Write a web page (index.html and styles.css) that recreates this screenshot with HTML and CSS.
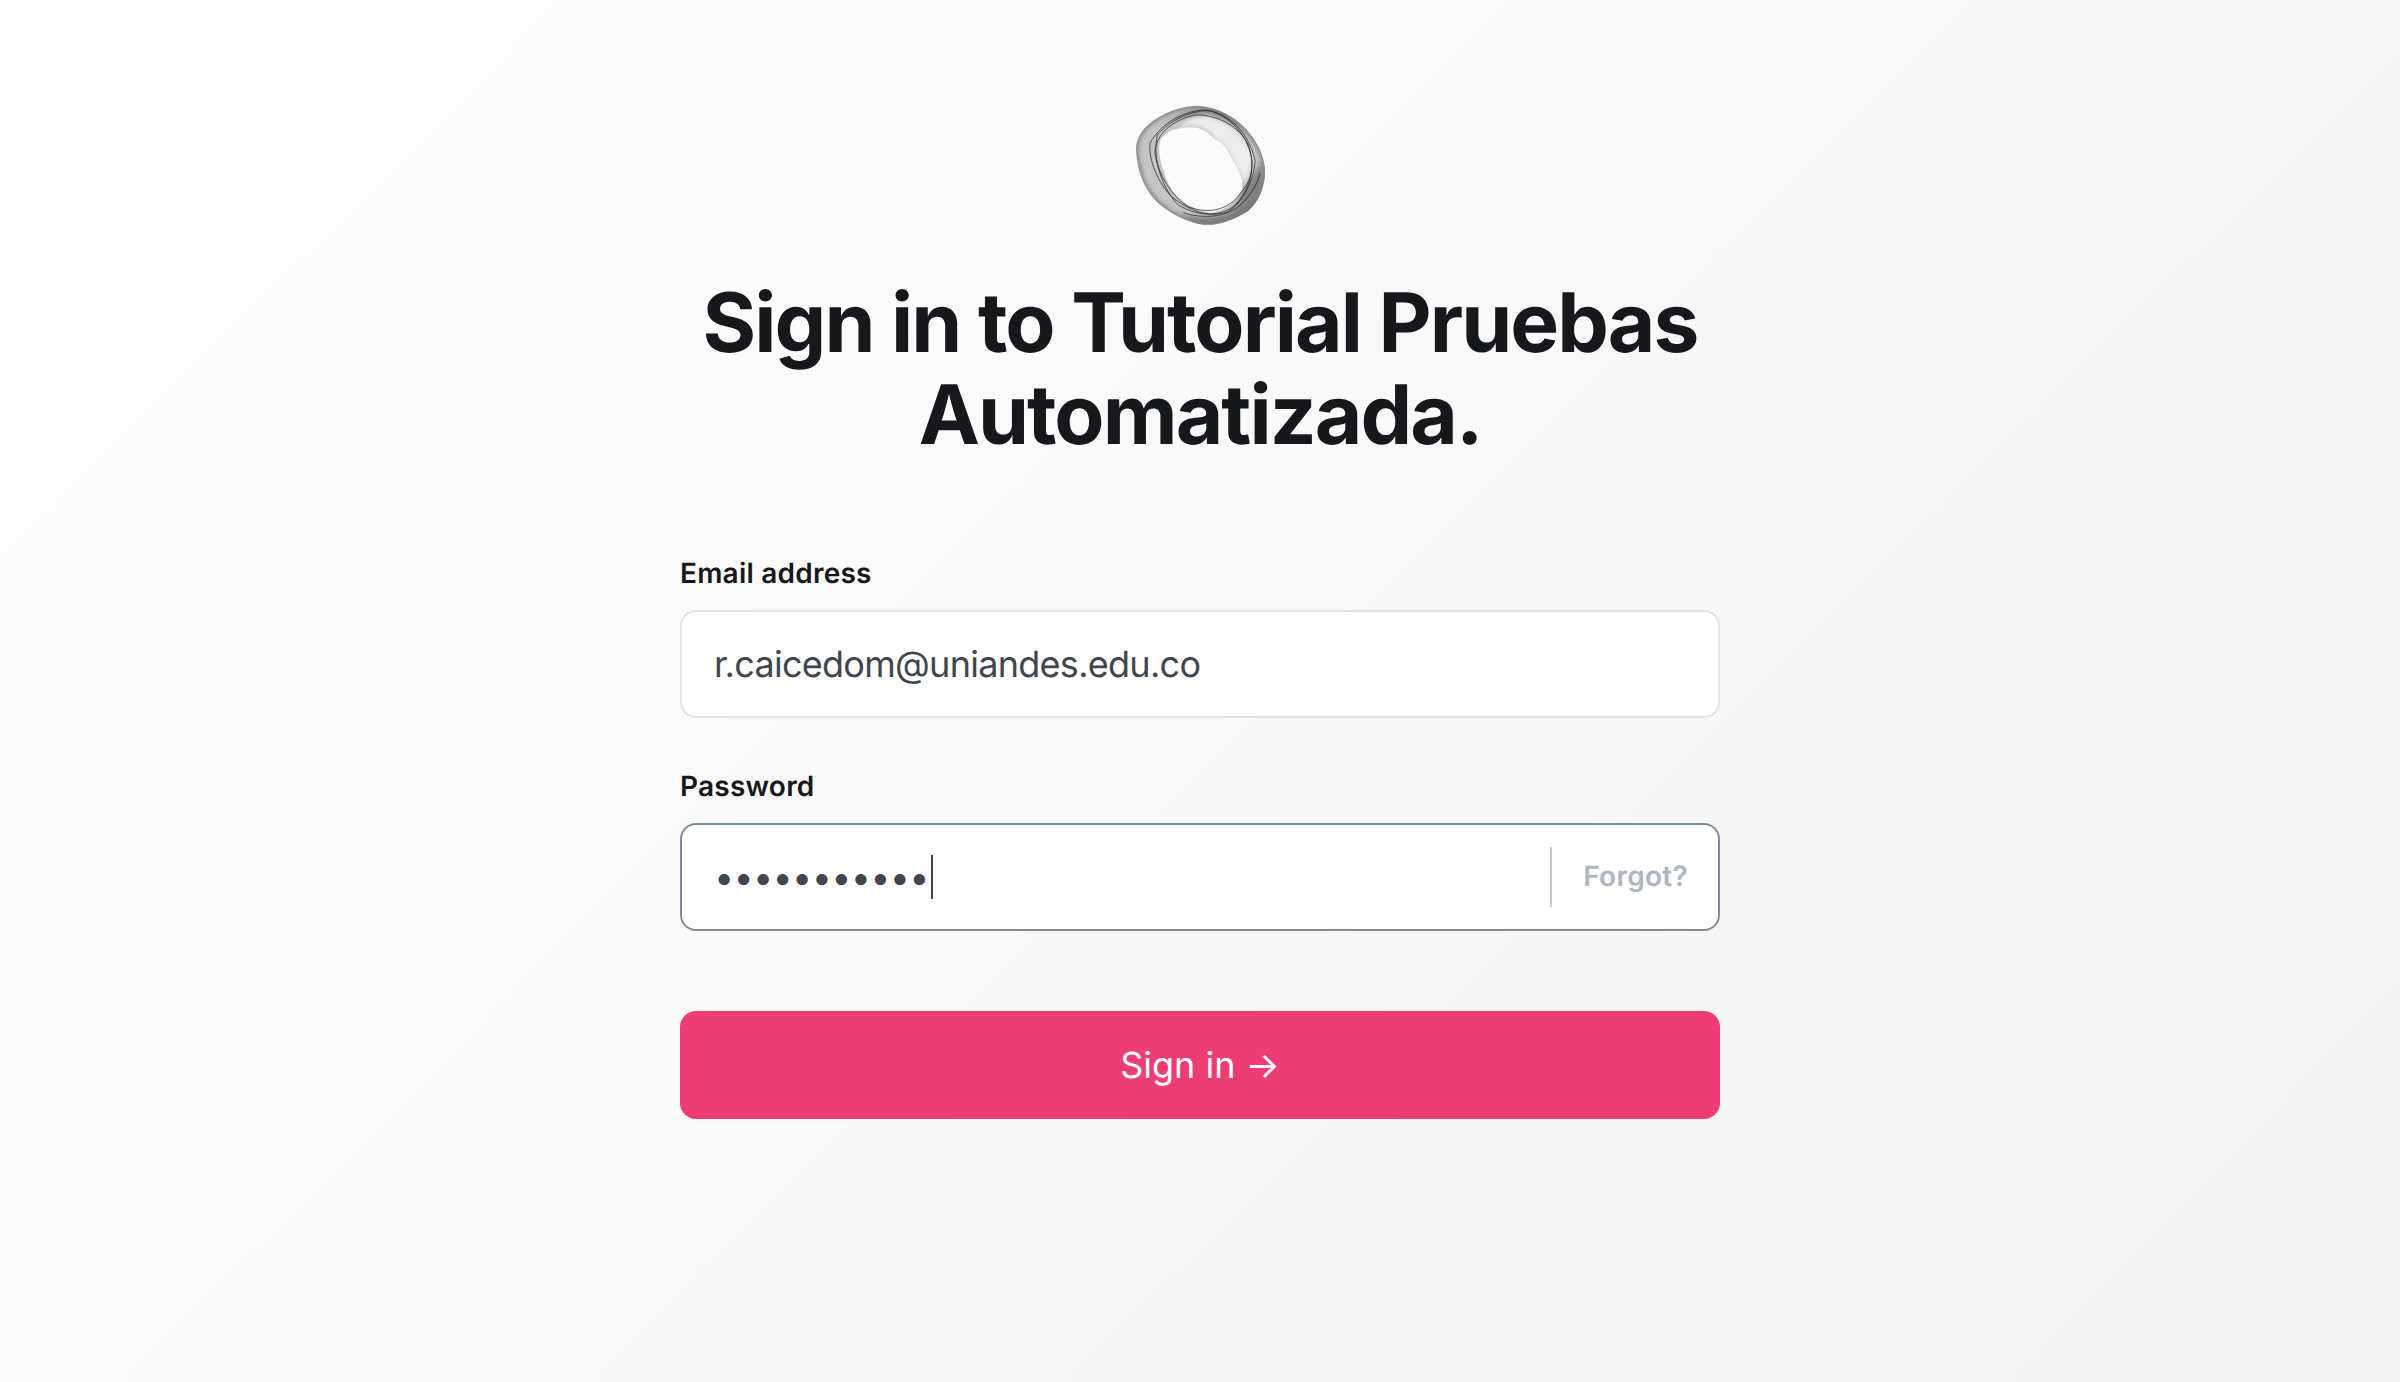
FILE: index.html
```html
<!DOCTYPE html>
<html lang="en">
<head>
    <meta charset="UTF-8">
    <meta name="viewport" content="width=device-width, initial-scale=1.0">
    <title>Sign in</title>
    <link rel="stylesheet" href="styles.css">
</head>
<body>

    <main class="login">
        <svg class="logo" viewBox="0 0 600 450" role="img" aria-label="Logo">
            <defs>
                <filter id="soften" x="-20%" y="-20%" width="140%" height="140%">
                    <feGaussianBlur stdDeviation="7"/>
                </filter>
                <clipPath id="ring-clip">
                    <path clip-rule="evenodd" d="M290 47C335 48 385 68 420 100C455 130 490 180 495 235C498 280 480 335 445 362C405 390 350 408 310 404C265 398 210 372 170 335C135 300 112 250 108 180C108 145 125 118 155 95C190 70 240 48 290 47ZM245 114C215 118 190 128 180 155C170 190 190 250 215 300C240 335 285 362 330 368C370 366 410 335 425 300C432 275 420 245 405 220C385 195 385 165 345 148C320 125 305 105 245 114Z"/>
                </clipPath>
            </defs>
            <path class="logo-base" fill-rule="evenodd" d="M290 47C335 48 385 68 420 100C455 130 490 180 495 235C498 280 480 335 445 362C405 390 350 408 310 404C265 398 210 372 170 335C135 300 112 250 108 180C108 145 125 118 155 95C190 70 240 48 290 47ZM245 114C215 118 190 128 180 155C170 190 190 250 215 300C240 335 285 362 330 368C370 366 410 335 425 300C432 275 420 245 405 220C385 195 385 165 345 148C320 125 305 105 245 114Z"/>
            <g clip-path="url(#ring-clip)">
                <path class="logo-soft" filter="url(#soften)" d="M240 112C290 100 320 108 345 148C385 165 385 195 410 235C425 258 432 275 430 285C445 260 462 225 458 195C430 130 385 92 320 78C280 80 250 95 240 112Z"/>
                <path class="logo-shade" filter="url(#soften)" d="M190 108C230 72 280 52 330 58C385 68 430 110 462 175C440 125 385 85 325 72C270 70 225 85 190 108Z"/>
                <path class="logo-shade" filter="url(#soften)" d="M435 290C455 270 470 240 482 215C498 260 485 325 445 362C410 385 360 402 310 402C280 395 260 385 240 372C290 385 345 385 390 365C410 345 425 315 435 290Z"/>
                <path class="logo-rim" filter="url(#soften)" d="M290 47C335 48 385 68 420 100C455 130 490 180 495 235C498 280 480 335 445 362C405 390 350 408 310 404C265 398 210 372 170 335C135 300 112 250 108 180C108 145 125 118 155 95C190 70 240 48 290 47Z"/>
            </g>
            <path class="logo-line" d="M150 160C175 110 240 65 310 60C385 65 445 125 465 210C465 265 430 335 385 365C330 385 270 365 215 320C175 280 145 210 150 160Z"/>
            <path class="logo-line" d="M172 135C205 95 270 60 330 62C385 80 430 120 450 185C470 240 440 315 400 350C350 385 285 375 235 345C190 300 155 210 172 135Z"/>
            <path class="logo-line" d="M165 190C165 135 215 90 285 75C350 72 420 110 445 165C465 220 455 275 425 305C385 365 320 372 265 350C215 320 175 255 165 190Z"/>
            <path class="logo-line" d="M250 368C300 385 370 385 415 350C445 325 470 290 480 250"/>
        </svg>

        <h1 class="title">Sign in to Tutorial Pruebas Automatizada.</h1>

        <form class="login-form">
            <label class="field-label" for="email">Email address</label>
            <div class="field">
                <input class="field-input" type="text" id="email" value="r.caicedom@uniandes.edu.co">
            </div>

            <label class="field-label" for="password">Password</label>
            <div class="field field-active">
                <input class="field-input" type="password" id="password" value="12345678901">
                <span class="caret"></span>
                <a class="forgot" href="#">Forgot?</a>
            </div>

            <button class="submit-btn" type="button">Sign in →</button>
        </form>
    </main>

</body>
</html>
```

FILE: styles.css
```css
* {
    box-sizing: border-box;
    text-rendering: geometricPrecision;
}
html, body {
    height: 100%;
}
body {
    margin: 0;
    font-family: Inter, "Liberation Sans", sans-serif;
    background: linear-gradient(135deg, #ffffff 0%, #f1f1f1 100%);
}
.login {
    display: flex;
    flex-direction: column;
    align-items: center;
    padding-top: 90px;
}
.logo {
    width: 200px;
    height: 150px;
    flex-shrink: 0;
}
.logo-base {
    fill: #c4c4c4;
}
.logo-soft {
    fill: #ececec;
}
.logo-shade {
    fill: #4a4a4a;
    opacity: 0.55;
}
.logo-rim {
    fill: none;
    stroke: #444;
    stroke-width: 12;
    opacity: 0.6;
}
.logo-line {
    fill: none;
    stroke: #2a2a2a;
    stroke-width: 3;
    opacity: 0.75;
}
.title {
    width: 1040px;
    margin: 37px 0 0;
    font-size: 82px;
    line-height: 92px;
    font-weight: 700;
    letter-spacing: -0.0235em;
    text-align: center;
    color: #16181c;
}
.login-form {
    width: 1040px;
    margin-top: 90px;
    display: flex;
    flex-direction: column;
}
.field-label {
    font-size: 28px;
    line-height: 44px;
    font-weight: 600;
    letter-spacing: 0.008em;
    color: #16181c;
    margin-bottom: 15px;
}
.field {
    position: relative;
    display: flex;
    align-items: center;
    height: 108px;
    margin-bottom: 46px;
    background-color: #fff;
    border: 2px solid #e2e2e2;
    border-radius: 16px;
}
.field-active {
    border-color: #7f8e9e;
    margin-bottom: 80px;
}
.field-input {
    flex: 1;
    min-width: 0;
    height: 100%;
    padding: 0 32px;
    border: none;
    outline: none;
    background: transparent;
    font-family: inherit;
    font-size: 36px;
    letter-spacing: -0.02em;
    color: #3f4650;
}
.caret {
    position: absolute;
    left: 249px;
    top: 30px;
    width: 2px;
    height: 44px;
    background-color: #3f4650;
}
.forgot {
    align-self: center;
    height: 60px;
    line-height: 58px;
    padding: 0 30px 0 31px;
    border-left: 2px solid #c6c6c6;
    font-size: 28px;
    font-weight: 600;
    letter-spacing: 0.01em;
    color: #aeb6c2;
    text-decoration: none;
}
.submit-btn {
    height: 108px;
    border: none;
    border-radius: 16px;
    background-color: #ec3d75;
    color: #fff;
    font-family: inherit;
    font-size: 36px;
    font-weight: 400;
    cursor: pointer;
}
```
